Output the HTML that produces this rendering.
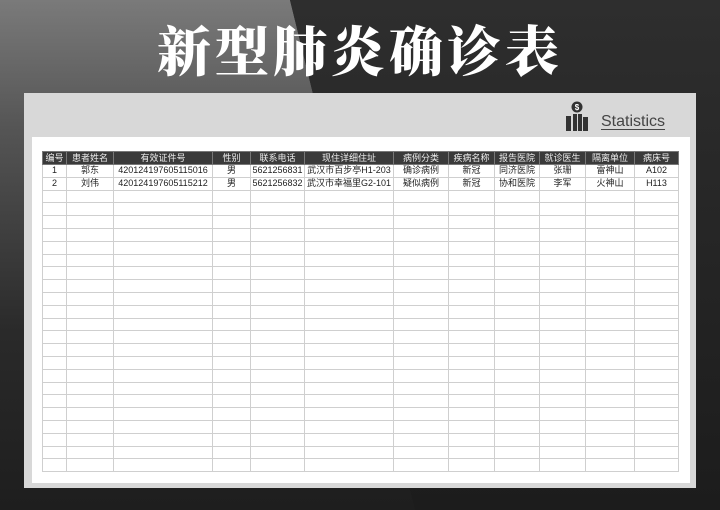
<!DOCTYPE html>
<html><head><meta charset="utf-8"><style>
body{margin:0;width:720px;height:510px;overflow:hidden;position:relative;background:#1c1c1c;font-family:"Liberation Sans","Noto Sans CJK SC",sans-serif}
.bgl{position:absolute;left:0;top:0;width:720px;height:510px;background:linear-gradient(180deg,#7a7a7a 0%,#555 25%,#2a2a2a 65%,#1e1e1e 100%);clip-path:polygon(0 0,290px 0,415px 510px,0 510px)}
.bgr{position:absolute;left:0;top:0;width:720px;height:510px;background:linear-gradient(180deg,#2e2e2e,#1c1c1c);clip-path:polygon(290px 0,720px 0,720px 510px,415px 510px)}
h1{position:absolute;left:0;width:720px;top:14px;margin:0;text-align:center;color:#fff;font-family:"Noto Serif CJK SC",serif;font-weight:900;font-size:54px;letter-spacing:4px;line-height:70px}
.panel{position:absolute;left:24px;top:93px;width:672px;height:395px;background:#d8d8d8}
.inner{position:absolute;left:32px;top:137px;width:658px;height:346px;background:#fff}
table{position:absolute;left:42px;top:151px;border-collapse:collapse;table-layout:fixed;font-size:9px;color:#222}
td,th{border:1px solid #cfcfcf;height:11.8px;padding:0;text-align:center;white-space:nowrap;overflow:hidden;line-height:11px}
th{background:#3a3a3a;color:#eee;font-weight:normal;border-color:#777;height:12px}
.stat{position:absolute;left:601px;top:113px;font-size:16px;color:#444;text-decoration:underline;text-underline-offset:3px;text-decoration-thickness:1px}
</style></head><body>
<div class="bgl"></div><div class="bgr"></div>
<h1>新型肺炎确诊表</h1>
<div class="panel"></div>
<div class="inner"></div>
<svg style="position:absolute;left:564px;top:100px" width="30" height="32" viewBox="0 0 30 32">
<circle cx="13" cy="7" r="5.5" fill="#333"/><text x="13" y="10" font-size="8" fill="#fff" text-anchor="middle" font-family="Liberation Sans" font-weight="bold">$</text>
<rect x="2" y="16" width="5" height="15" fill="#333"/><rect x="9" y="14" width="4" height="17" fill="#333"/><rect x="14" y="14" width="4" height="17" fill="#333"/><rect x="19" y="17" width="5" height="14" fill="#333"/>
</svg>
<div class="stat">Statistics</div>
<table>
<colgroup><col style="width:24px"><col style="width:47px"><col style="width:99px"><col style="width:38px"><col style="width:54px"><col style="width:89px"><col style="width:55px"><col style="width:46px"><col style="width:45px"><col style="width:46px"><col style="width:49px"><col style="width:44px"></colgroup>
<tr><th>编号</th><th>患者姓名</th><th>有效证件号</th><th>性别</th><th>联系电话</th><th>现住详细住址</th><th>病例分类</th><th>疾病名称</th><th>报告医院</th><th>就诊医生</th><th>隔离单位</th><th>病床号</th></tr>
<tr><td>1</td><td>郭东</td><td>420124197605115016</td><td>男</td><td>5621256831</td><td>武汉市百步亭H1-203</td><td>确诊病例</td><td>新冠</td><td>同济医院</td><td>张珊</td><td>雷神山</td><td>A102</td></tr>
<tr><td>2</td><td>刘伟</td><td>420124197605115212</td><td>男</td><td>5621256832</td><td>武汉市幸福里G2-101</td><td>疑似病例</td><td>新冠</td><td>协和医院</td><td>李军</td><td>火神山</td><td>H113</td></tr>
<tr><td></td><td></td><td></td><td></td><td></td><td></td><td></td><td></td><td></td><td></td><td></td><td></td></tr>
<tr><td></td><td></td><td></td><td></td><td></td><td></td><td></td><td></td><td></td><td></td><td></td><td></td></tr>
<tr><td></td><td></td><td></td><td></td><td></td><td></td><td></td><td></td><td></td><td></td><td></td><td></td></tr>
<tr><td></td><td></td><td></td><td></td><td></td><td></td><td></td><td></td><td></td><td></td><td></td><td></td></tr>
<tr><td></td><td></td><td></td><td></td><td></td><td></td><td></td><td></td><td></td><td></td><td></td><td></td></tr>
<tr><td></td><td></td><td></td><td></td><td></td><td></td><td></td><td></td><td></td><td></td><td></td><td></td></tr>
<tr><td></td><td></td><td></td><td></td><td></td><td></td><td></td><td></td><td></td><td></td><td></td><td></td></tr>
<tr><td></td><td></td><td></td><td></td><td></td><td></td><td></td><td></td><td></td><td></td><td></td><td></td></tr>
<tr><td></td><td></td><td></td><td></td><td></td><td></td><td></td><td></td><td></td><td></td><td></td><td></td></tr>
<tr><td></td><td></td><td></td><td></td><td></td><td></td><td></td><td></td><td></td><td></td><td></td><td></td></tr>
<tr><td></td><td></td><td></td><td></td><td></td><td></td><td></td><td></td><td></td><td></td><td></td><td></td></tr>
<tr><td></td><td></td><td></td><td></td><td></td><td></td><td></td><td></td><td></td><td></td><td></td><td></td></tr>
<tr><td></td><td></td><td></td><td></td><td></td><td></td><td></td><td></td><td></td><td></td><td></td><td></td></tr>
<tr><td></td><td></td><td></td><td></td><td></td><td></td><td></td><td></td><td></td><td></td><td></td><td></td></tr>
<tr><td></td><td></td><td></td><td></td><td></td><td></td><td></td><td></td><td></td><td></td><td></td><td></td></tr>
<tr><td></td><td></td><td></td><td></td><td></td><td></td><td></td><td></td><td></td><td></td><td></td><td></td></tr>
<tr><td></td><td></td><td></td><td></td><td></td><td></td><td></td><td></td><td></td><td></td><td></td><td></td></tr>
<tr><td></td><td></td><td></td><td></td><td></td><td></td><td></td><td></td><td></td><td></td><td></td><td></td></tr>
<tr><td></td><td></td><td></td><td></td><td></td><td></td><td></td><td></td><td></td><td></td><td></td><td></td></tr>
<tr><td></td><td></td><td></td><td></td><td></td><td></td><td></td><td></td><td></td><td></td><td></td><td></td></tr>
<tr><td></td><td></td><td></td><td></td><td></td><td></td><td></td><td></td><td></td><td></td><td></td><td></td></tr>
<tr><td></td><td></td><td></td><td></td><td></td><td></td><td></td><td></td><td></td><td></td><td></td><td></td></tr>
</table>
</body></html>
